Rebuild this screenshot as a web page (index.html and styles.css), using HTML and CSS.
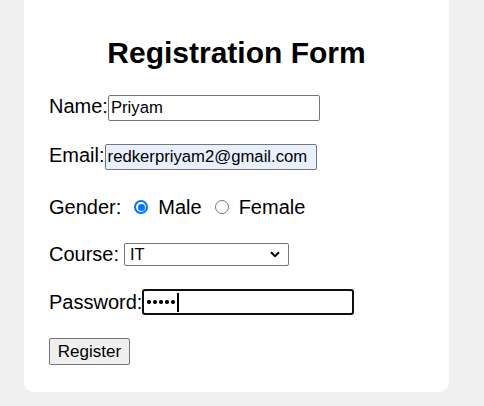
FILE: index.html
```html
<!DOCTYPE html>
<html>
<head>
<meta charset="utf-8">
<link rel="stylesheet" href="styles.css">
</head>
<body>
<div class="card">
  <h2 class="title">Registration Form</h2>
  <form class="form">
    <div class="row r-name"><label class="lbl">Name:</label><input class="field name" type="text" value="Priyam"></div>
    <div class="row r-email"><label class="lbl">Email:</label><input class="field email" type="text" value="redkerpriyam2@gmail.com"></div>
    <div class="row gender"><label class="lbl">Gender:</label>
      <span class="radio checked"></span><span class="opt">Male</span>
      <span class="radio"></span><span class="opt">Female</span>
    </div>
    <div class="row r-course"><label class="lbl">Course:</label>
      <div class="select"><span class="sel-text">IT</span>
        <svg class="chev" width="10" height="7" viewBox="0 0 10 7"><path d="M1 1.2 L5 5.2 L9 1.2" fill="none" stroke="#000" stroke-width="2"/></svg>
      </div>
    </div>
    <div class="row"><label class="lbl">Password:</label>
      <div class="field pass"><span class="dot"></span><span class="dot"></span><span class="dot"></span><span class="dot"></span><span class="dot"></span><span class="caret"></span></div>
    </div>
    <div class="row"><button type="button" class="btn">Register</button></div>
  </form>
</div>
</body>
</html>
```
FILE: styles.css
```css
html, body { margin: 0; padding: 0; }
body {
  background: #f0f0f0;
  font-family: Arial, "Liberation Sans", sans-serif;
  height: 406px;
  overflow: hidden;
}
.card {
  width: 425px;
  box-sizing: border-box;
  margin: -20px 0 0 24px;
  background: #fff;
  border-radius: 10px;
  padding: 20px 25px 27px 25px;
}
.title {
  font-size: 30px;
  font-weight: bold;
  text-align: center;
  margin: 36px 0 23px 0;
  line-height: 34px;
}
.form { display: flex; flex-direction: column; }
.row {
  display: flex;
  align-items: baseline;
  font-size: 20px;
  margin-bottom: 23px;
  line-height: 26px;
}
.r-name { margin-bottom: 21px; }
.r-email { margin-bottom: 22px; }
.r-course { margin-bottom: 22px; }
.row:last-child { margin-bottom: 0; }
.lbl { color: #000; }
.field {
  box-sizing: border-box;
  width: 212px;
  height: 26px;
  border: 1px solid #767676;
  border-radius: 2px;
  font-family: Arial, "Liberation Sans", sans-serif;
  font-size: 16.7px;
  padding: 0 2px;
  color: #000;
  background: #fff;
  outline: none;
}
.email { background: #e8f0fe; }
.gender { margin-top: 2px; margin-bottom: 21px; }
.gender .radio {
  width: 14px; height: 14px;
  border: 1px solid #767676;
  border-radius: 50%;
  box-sizing: border-box;
  align-self: center;
  margin: 0 10px 0 13px;
  position: relative;
}
.gender .radio.checked {
  border: 2px solid #0075ff;
  background: #fff;
  margin-left: 13px;
}
.gender .radio.checked::after {
  content: "";
  position: absolute;
  left: 1.5px; top: 1.5px;
  width: 7px; height: 7px;
  border-radius: 50%;
  background: #0075ff;
}
.select {
  box-sizing: border-box;
  width: 165px;
  height: 23px;
  margin-left: 5px;
  border: 1px solid #767676;
  border-radius: 2px;
  display: flex;
  align-items: center;
  justify-content: space-between;
  padding: 0 8px 0 5px;
  font-size: 16.5px;
  align-self: center;
}
.pass {
  border: 2px solid #101010;
  border-radius: 3px;
  display: flex;
  align-items: center;
  gap: 2.5px;
  padding: 0 3px;
  align-self: center;
}
.dot { width: 3.5px; height: 3.5px; border-radius: 50%; background: #000; }
.caret { width: 2px; height: 19px; background: #000; margin-left: 0; }
.btn {
  font-family: Arial, "Liberation Sans", sans-serif;
  font-size: 17px;
  width: 81px;
  height: 27px;
  background: #efefef;
  border: 1px solid #767676;
  border-radius: 2px;
  color: #000;
  padding: 0;
}
```
